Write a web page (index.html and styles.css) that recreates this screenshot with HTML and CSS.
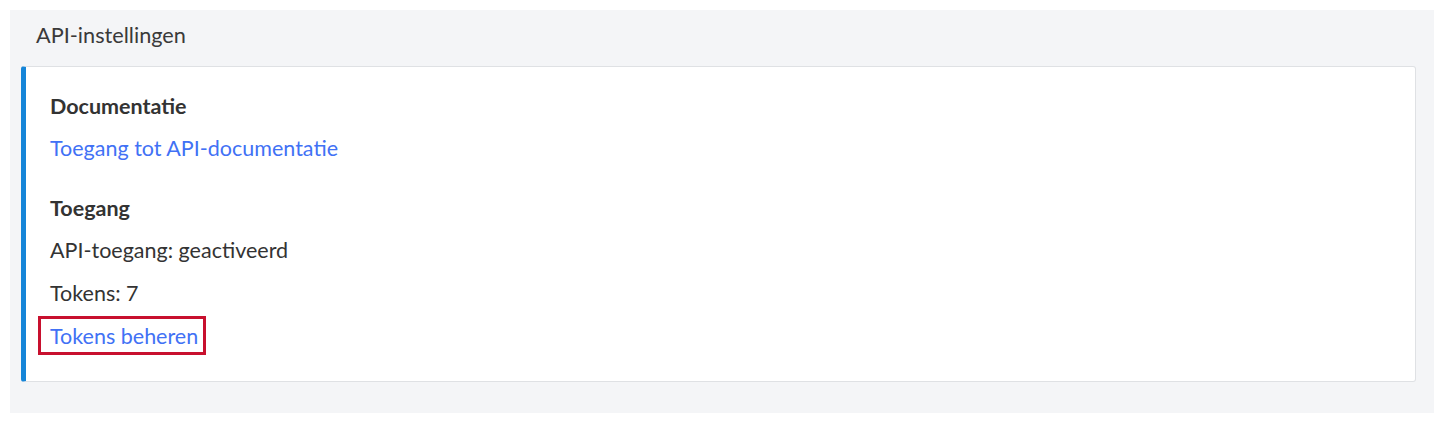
FILE: index.html
```html
<!DOCTYPE html>
<html lang="nl">
<head>
    <meta charset="UTF-8">
    <title>API-instellingen</title>
    <link rel="stylesheet" href="styles.css">
</head>
<body>
    <div class="panel">
        <div class="panel-header">API-instellingen</div>
        <div class="card">
            <div class="section">
                <h3>Documentatie</h3>
                <p><a href="#">Toegang tot API-documentatie</a></p>
            </div>
            <div class="section">
                <h3>Toegang</h3>
                <p>API-toegang: geactiveerd</p>
                <p>Tokens: 7</p>
                <p><a href="#" class="highlight">Tokens beheren</a></p>
            </div>
        </div>
    </div>
</body>
</html>
```

FILE: styles.css
```css
body {
    margin: 10px;
    font-family: Lato, "Open Sans", sans-serif;
    color: #333;
    background: #fff;
}
.panel {
    width: 1424px;
    height: 403px;
    box-sizing: border-box;
    background: #f4f5f7;
    padding: 0 18px 0 11px;
}
.panel-header {
    height: 56px;
    line-height: 51px;
    padding-left: 15px;
    font-size: 21.7px;
    color: #3a3a3a;
}
.card {
    background: #fff;
    border: 1px solid #dfe1e4;
    border-left: 5px solid #1585d8;
    border-radius: 3px;
    padding: 27px 24px 31px 24px;
}
.section + .section {
    margin-top: 34px;
}
.section h3 {
    margin: 0;
    font-size: 21.5px;
    font-weight: bold;
    line-height: 25px;
    color: #333;
}
.section p {
    margin: 16px 0 0;
    font-size: 21.5px;
    line-height: 27px;
}
a {
    color: #4171f5;
    text-decoration: none;
}
.highlight {
    display: inline-block;
    border: 3px solid #c8102e;
    padding: 4px 5px 2px 9px;
    margin: -7px 0 -5px -12px;
}
```
